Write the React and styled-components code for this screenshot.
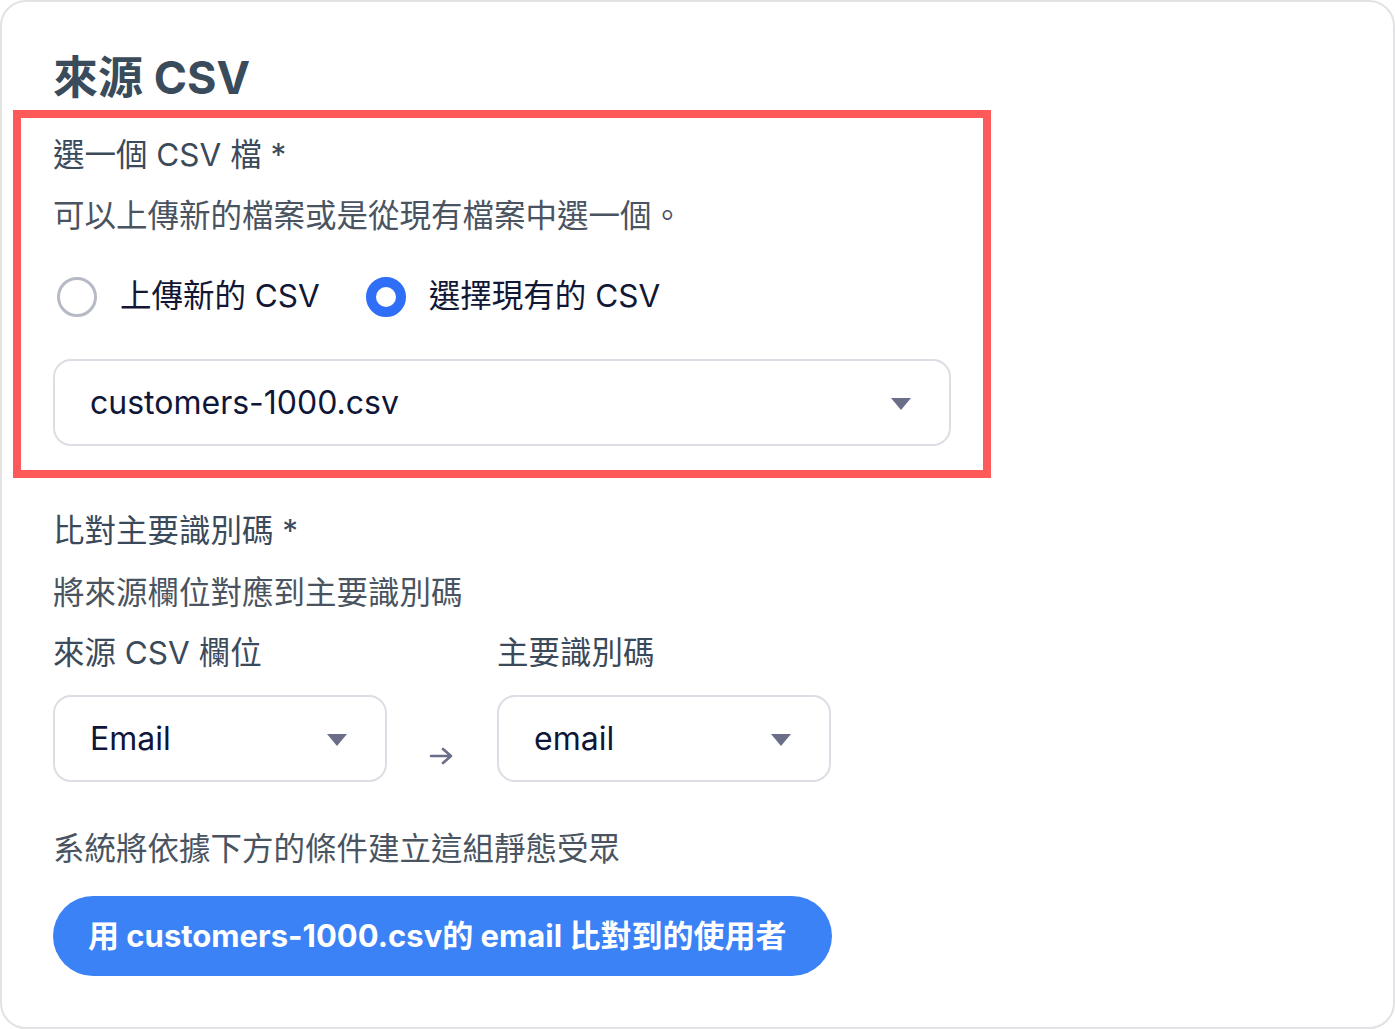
import { createGlobalStyle, styled } from "styled-components"

const Global = createGlobalStyle`
    html, body {
        margin: 0;
        padding: 0;
        background: #ffffff;
    }
    * {
        box-sizing: border-box;
    }
`

const font = `Inter, "Noto Sans CJK TC", "Noto Sans", sans-serif`

const Card = styled.div`
    width: 1395px;
    height: 1029px;
    border: 2px solid #e2e2e4;
    border-radius: 26px;
    background: #ffffff;
    padding: 48px 0 0 51px;
    font-family: ${font};
    display: flex;
    flex-direction: column;
    align-items: flex-start;
`

const Title = styled.h1`
    margin: 0;
    font-size: 45px;
    line-height: 56px;
    font-weight: 700;
    color: #3a4b5b;
`

const Highlight = styled.div`
    margin: 4px 0 0 -40px;
    width: 978px;
    border: 8px solid #ff5a5a;
    padding: 17px 32px 24px 32px;
    display: flex;
    flex-direction: column;
`

const Label = styled.div`
    font-size: 31.5px;
    line-height: 40px;
    color: #3b4a5a;
    margin-top: ${p => p.$top || 0}px;
`

const Hint = styled.div`
    font-size: 31.5px;
    line-height: 40px;
    color: #4a5461;
    margin-top: ${p => p.$top || 0}px;
`

const RadioRow = styled.div`
    display: flex;
    align-items: center;
    gap: 42px;
    margin-top: 41px;
    height: 40px;
`

const RadioOption = styled.label`
    display: flex;
    align-items: center;
    gap: 23px;
    font-size: 31.5px;
    line-height: 40px;
    color: #111735;
    padding-bottom: 2px;
`

const Circle = styled.span`
    width: 40px;
    height: 40px;
    border-radius: 50%;
    margin-left: 4px;
    margin-top: 2px;
    border: ${p => (p.$checked ? "10px solid #2f6ef6" : "3px solid #b6bac4")};
    background: #ffffff;
`

const Select = styled.div`
    width: ${p => p.$w}px;
    height: 87px;
    border: 2px solid #dddde5;
    border-radius: 18px;
    display: flex;
    align-items: center;
    justify-content: space-between;
    padding: 0 38px 0 35px;
    font-size: 32px;
    color: #0f1638;
    margin-top: ${p => p.$top || 0}px;
`

const Caret = styled.span`
    width: 0;
    height: 0;
    border-left: 10px solid transparent;
    border-right: 10px solid transparent;
    border-top: 12px solid #6a6e88;
    margin-top: 3px;
`

const MapGrid = styled.div`
    display: grid;
    grid-template-columns: 334px 110px 334px;
    margin-top: 20px;
`

const ColLabel = styled.div`
    font-size: 31.5px;
    line-height: 40px;
    color: #3b4a5a;
    grid-column: ${p => p.$col};
    margin-bottom: 22px;
`

const Arrow = styled.div`
    display: flex;
    justify-content: center;
    align-items: center;
    padding-top: 34px;
`

const Submit = styled.button`
    margin-top: 27px;
    width: 779px;
    height: 80px;
    border: none;
    border-radius: 40px;
    background: #3b82f6;
    color: #ffffff;
    font-family: ${font};
    font-size: 31px;
    font-weight: 700;
    text-align: left;
    padding: 0 0 5px 35px;
`

export default function App() {
    return (
        <>
            <Global />
            <Card>
                <Title>來源 CSV</Title>
                <Highlight>
                    <Label>選一個 CSV 檔 *</Label>
                    <Hint $top={21}>可以上傳新的檔案或是從現有檔案中選一個。</Hint>
                    <RadioRow>
                        <RadioOption>
                            <Circle />
                            上傳新的 CSV
                        </RadioOption>
                        <RadioOption>
                            <Circle $checked />
                            選擇現有的 CSV
                        </RadioOption>
                    </RadioRow>
                    <Select $w={898} $top={42}>
                        customers-1000.csv
                        <Caret />
                    </Select>
                </Highlight>

                <Label $top={33}>比對主要識別碼 *</Label>
                <Hint $top={22}>將來源欄位對應到主要識別碼</Hint>
                <MapGrid>
                    <ColLabel $col={1}>來源 CSV 欄位</ColLabel>
                    <ColLabel $col={3}>主要識別碼</ColLabel>
                    <Select $w={334}>
                        Email
                        <Caret />
                    </Select>
                    <Arrow>
                        <svg width="26" height="20" viewBox="0 0 26 20" fill="none">
                            <path d="M2 10h20M14 3l8 7-8 7" stroke="#6a6e88" strokeWidth="2.6" strokeLinecap="round" strokeLinejoin="round" />
                        </svg>
                    </Arrow>
                    <Select $w={334}>
                        email
                        <Caret />
                    </Select>
                </MapGrid>

                <Hint $top={47}>系統將依據下方的條件建立這組靜態受眾</Hint>
                <Submit>用 customers-1000.csv的 email 比對到的使用者</Submit>
            </Card>
        </>
    )
}
